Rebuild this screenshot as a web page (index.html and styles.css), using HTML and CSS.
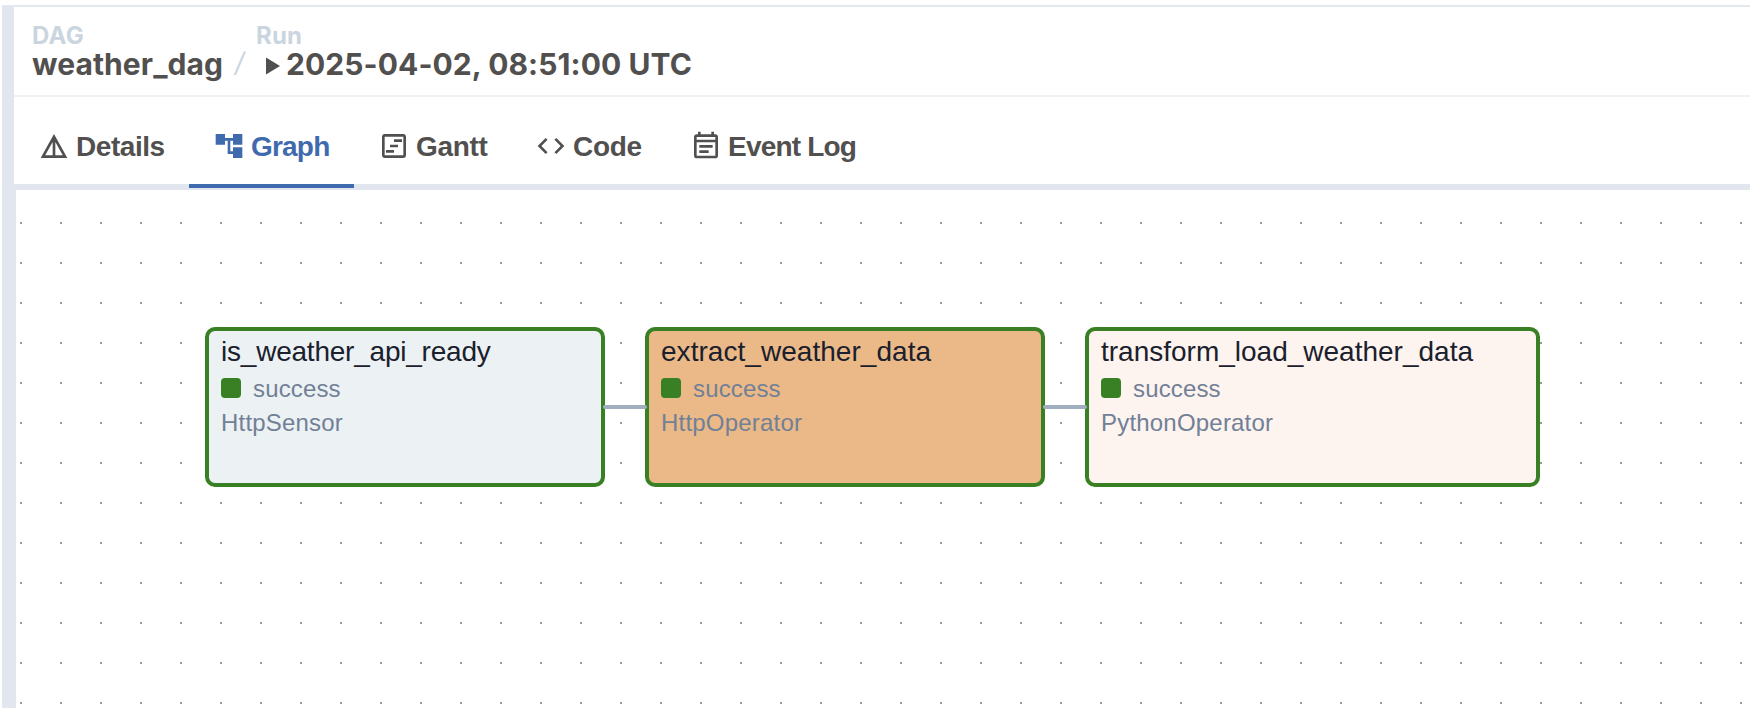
FILE: index.html
```html
<!DOCTYPE html>
<html lang="en">
<head>
<meta charset="utf-8">
<title>weather_dag</title>
<link rel="stylesheet" href="styles.css">
</head>
<body>
<div class="page">
  <header class="crumbs">
    <div class="crumb crumb-dag">
      <span class="crumb-label">DAG</span>
      <span class="crumb-value">weather_dag</span>
    </div>
    <span class="slash">/</span>
    <div class="crumb">
      <span class="crumb-label">Run</span>
      <span class="crumb-value crumb-run"><svg class="play" width="14" height="18" viewBox="0 0 14 18"><path d="M0 0.5L14 9L0 17.5Z"/></svg><span class="run-date">2025-04-02, 08:51:00 UTC</span></span>
    </div>
  </header>
  <nav class="tabs">
    <a class="tab tab-details">
      <svg class="icon" width="32" height="32" viewBox="0 0 24 24"><path d="M12 3L2 21h20L12 3zm1 5.920L18.600 19H13V8.920zm-2 0V19H5.400L11 8.920z"/></svg>
      <span>Details</span>
    </a>
    <a class="tab tab-graph active">
      <svg class="icon" width="32" height="32" viewBox="0 0 24 24"><path d="M22 11V3h-7v3H9V3H2v8h7V8h2v10h4v3h7v-8h-7v3h-2V8h2v3z"/></svg>
      <span>Graph</span>
    </a>
    <a class="tab tab-gantt">
      <svg class="icon" width="32" height="32" viewBox="0 0 24 24"><path d="M19 5v14H5V5h14m0-2H5c-1.100 0-2 .9-2 2v14c0 1.100.9 2 2 2h14c1.100 0 2-.9 2-2V5c0-1.100-.9-2-2-2zM12 7h6v2h-6zM9 11h6v2H9zM6 15h6v2H6z"/></svg>
      <span>Gantt</span>
    </a>
    <a class="tab tab-code">
      <svg class="icon" width="32" height="32" viewBox="0 0 24 24"><path d="M9.400 16.600L4.800 12l4.600-4.600L8 6l-6 6 6 6 1.400-1.400zm5.200 0l4.600-4.600-4.600-4.600L16 6l6 6-6 6-1.400-1.400z"/></svg>
      <span>Code</span>
    </a>
    <a class="tab tab-log">
      <svg class="icon icon-log" width="32" height="32" viewBox="0 0 24 24"><path d="M19 4h-1V2h-2v2H8V2H6v2H5c-1.110 0-2 .9-2 2v14c0 1.100.9 2 2 2h14c1.100 0 2-.9 2-2V6c0-1.100-.9-2-2-2zm0 16H5V10h14v10zM5 8V6h14v2H5zm2 4h10v2H7zm0 4h7v2H7z"/></svg>
      <span>Event Log</span>
    </a>
  </nav>
  <main class="canvas">
    <div class="node n1">
      <div class="title">is_weather_api_ready</div>
      <div class="state"><i class="swatch"></i><span>success</span></div>
      <div class="operator">HttpSensor</div>
    </div>
    <div class="node n2">
      <div class="title">extract_weather_data</div>
      <div class="state"><i class="swatch"></i><span>success</span></div>
      <div class="operator">HttpOperator</div>
    </div>
    <div class="node n3">
      <div class="title">transform_load_weather_data</div>
      <div class="state"><i class="swatch"></i><span>success</span></div>
      <div class="operator">PythonOperator</div>
    </div>
    <div class="edge e1"></div>
    <div class="edge e2"></div>
  </main>
</div>
</body>
</html>
```
FILE: styles.css
```css
* { box-sizing: border-box; }
body { margin: 0; background: #fff; overflow: hidden; }
.page {
  height: 703px;
  margin-top: 5px;
  margin-left: 2px;
  border-top: 2px solid #e2e8f0;
  border-left: 12px solid #e2e6ef;
  display: flex;
  flex-direction: column;
  font-family: "Liberation Sans", Arial, sans-serif;
}
.crumbs {
  height: 90px;
  flex: none;
  display: flex;
  padding: 14px 0 0 18px;
  border-bottom: 2px solid #edf2f7;
  font-family: Inter, sans-serif;
  font-weight: 700;
  white-space: nowrap;
}
.crumb { display: flex; flex-direction: column; }
.crumb-dag { width: 202px; }
.crumb-label { font-size: 24px; line-height: 29px; letter-spacing: 0.2px; color: #cbd5e0; }
.crumb-value { font-size: 30px; line-height: 28px; letter-spacing: 0.09px; color: #51504f; }
.slash { width: 22px; padding: 28px 0 0 1px; font-size: 27px; line-height: 28px; font-weight: 400; color: #cbd5e0; }
.slash { transform: skewX(-9deg); transform-origin: 0 42px; }
.crumb-run { display: flex; align-items: center; }
.play { margin: 4px 6px 0 10px; fill: #51504f; }
.tabs {
  height: 93px;
  flex: none;
  display: flex;
  border-bottom: 6px solid #e2e6ef;
}
.tab {
  height: 91px;
  display: flex;
  align-items: center;
  gap: 6px;
  padding: 7px 0 0 24px;
  font-size: 28px;
  line-height: 34px;
  font-weight: 700;
  color: #51504f;
  white-space: nowrap;
}
.tab span { padding-top: 2px; }
.icon { flex: none; fill: currentColor; }
.icon-log { margin-top: -2px; }
.tab-details { width: 175px; letter-spacing: -0.45px; }
.tab-graph { width: 165px; letter-spacing: -0.8px; }
.tab-gantt { width: 157px; letter-spacing: -0.35px; }
.tab-code { width: 155px; letter-spacing: -0.3px; }
.tab-log { letter-spacing: -0.8px; }
.active { color: #3f6bae; border-bottom: 4px solid #3f6bae; padding-top: 11px; }
.canvas {
  position: relative;
  flex: 1;
  border-left: 2px solid #e2e6ef;
  background: conic-gradient(from 90deg at 38px 38px, #999 25%, transparent 0) 6px 34px / 40px 40px;
}
.node {
  position: absolute;
  top: 137px;
  width: 400px;
  height: 160px;
  border: 4px solid #388023;
  border-radius: 10px;
  padding: 4px 12px;
  white-space: nowrap;
}
.n1 { left: 189px; background: #ecf1f4; }
.n2 { left: 629px; background: #ebb988; }
.n3 { left: 1069px; width: 455px; background: #fdf3ef; }
.title { font-size: 28px; line-height: 34px; color: #1a202c; }
.n1 .title { letter-spacing: -0.22px; }
.n2 .title { letter-spacing: 0.04px; }
.state { display: flex; align-items: center; gap: 12px; height: 34px; margin-top: 3px; font-size: 24px; letter-spacing: 0.15px; color: #718096; }
.swatch { width: 20px; height: 20px; margin-top: -2px; border-radius: 4px; background: #388023; }
.operator { font-size: 24px; line-height: 34px; letter-spacing: 0.2px; color: #718096; }
.edge { position: absolute; top: 215px; width: 44px; height: 4px; border-radius: 2px; background: #a0aec0; }
.e1 { left: 587px; }
.e2 { left: 1027px; }
```
